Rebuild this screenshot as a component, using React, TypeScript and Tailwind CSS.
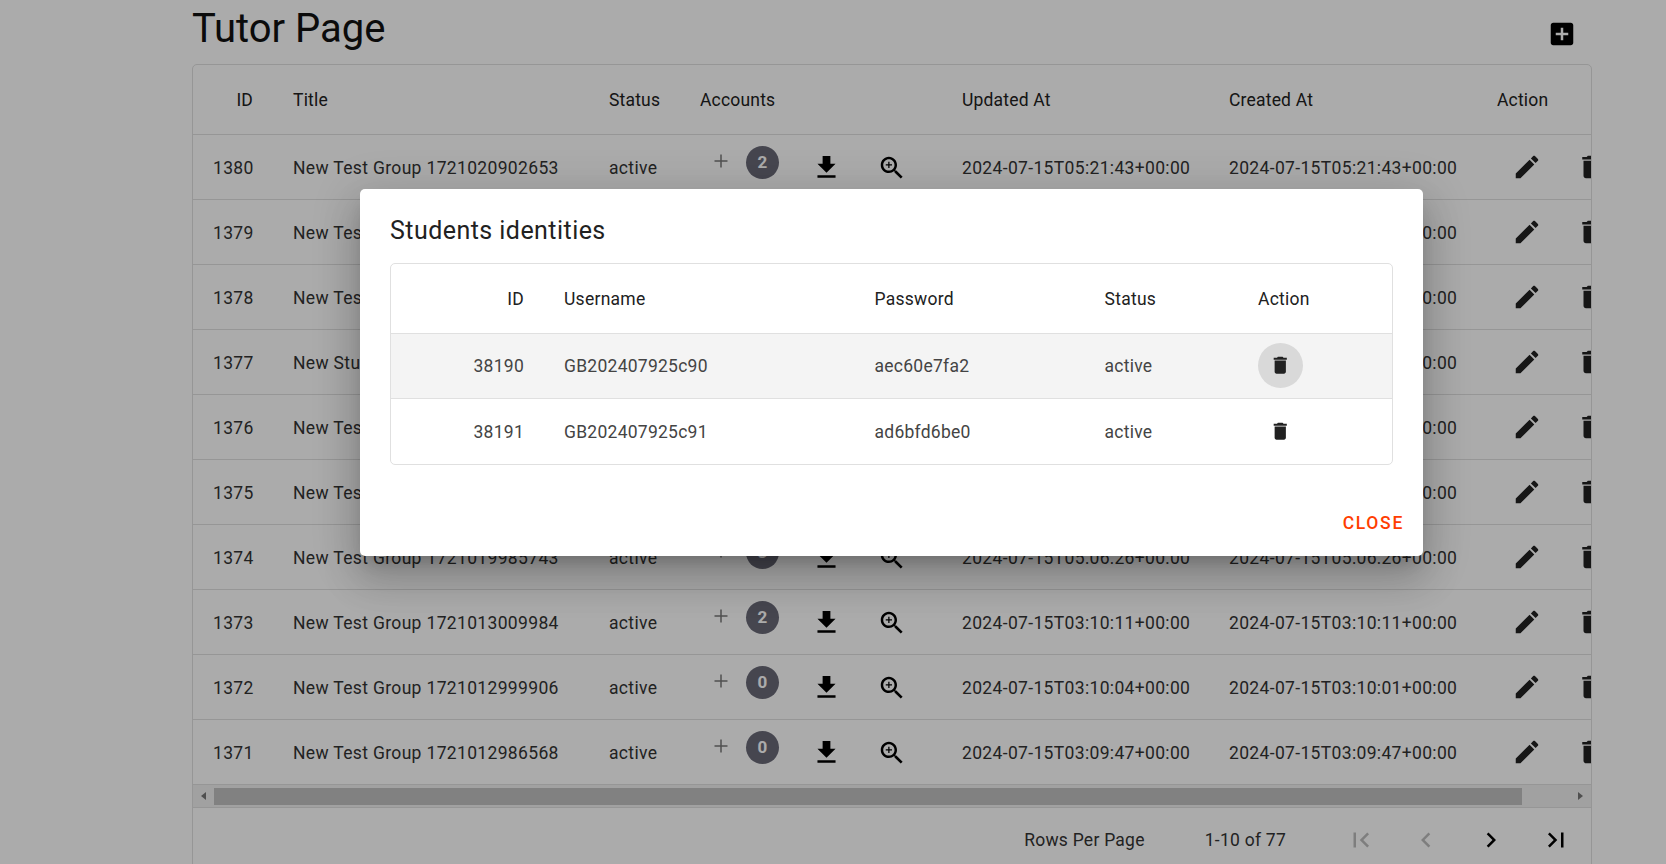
const ICONS = {
  addBox: "M19 3H5c-1.11 0-2 .9-2 2v14c0 1.1.89 2 2 2h14c1.1 0 2-.9 2-2V5c0-1.1-.9-2-2-2zm-2 10h-4v4h-2v-4H7v-2h4V7h2v4h4v2z",
  download: "M5 20h14v-2H5v2zM19 9h-4V3H9v6H5l7 7 7-7z",
  zoomIn: "M15.5 14h-.79l-.28-.27C15.41 12.59 16 11.11 16 9.5 16 5.91 13.09 3 9.5 3S3 5.91 3 9.5 5.91 16 9.5 16c1.61 0 3.09-.59 4.23-1.57l.27.28v.79l5 4.99L20.49 19l-4.99-5zm-6 0C7.01 14 5 11.99 5 9.5S7.01 5 9.5 5 14 7.01 14 9.5 11.99 14 9.5 14zM12 10h-2v2H9v-2H7V9h2V7h1v2h2v1z",
  edit: "M3 17.25V21h3.75L17.81 9.94l-3.75-3.75L3 17.25zM20.71 7.04c.39-.39.39-1.02 0-1.41l-2.34-2.34c-.39-.39-1.02-.39-1.41 0l-1.83 1.83 3.75 3.75 1.83-1.83z",
  trash: "M6 19c0 1.1.9 2 2 2h8c1.1 0 2-.9 2-2V7H6v12zM19 4h-3.5l-1-1h-5l-1 1H5v2h14V4z",
  first: "M18.41 16.59L13.82 12l4.59-4.59L17 6l-6 6 6 6zM6 6h2v12H6z",
  prev: "M15.41 7.41L14 6l-6 6 6 6 1.41-1.41L10.83 12z",
  next: "M10 6L8.59 7.41 13.17 12l-4.58 4.59L10 18l6-6z",
  last: "M5.59 7.41L10.18 12l-4.59 4.59L7 18l6-6-6-6zM16 6h2v12h-2z",
};

function Icon({ name, className }: { name: keyof typeof ICONS; className: string }) {
  return (
    <svg viewBox="0 0 24 24" fill="currentColor" className={className}>
      <path d={ICONS[name]} />
    </svg>
  );
}

const rows = [
  { id: 1380, title: "New Test Group 1721020902653", count: 2, updated: "2024-07-15T05:21:43+00:00", created: "2024-07-15T05:21:43+00:00" },
  { id: 1379, title: "New Test Group 1721020877412", count: 0, updated: "2024-07-15T05:21:18+00:00", created: "2024-07-15T05:21:18+00:00" },
  { id: 1378, title: "New Test Group 1721020861120", count: 0, updated: "2024-07-15T05:21:01+00:00", created: "2024-07-15T05:21:01+00:00" },
  { id: 1377, title: "New Student Group 172102055", count: 0, updated: "2024-07-15T05:15:52+00:00", created: "2024-07-15T05:15:52+00:00" },
  { id: 1376, title: "New Test Group 1721020210334", count: 0, updated: "2024-07-15T05:10:10+00:00", created: "2024-07-15T05:10:10+00:00" },
  { id: 1375, title: "New Test Group 1721020003217", count: 0, updated: "2024-07-15T05:06:43+00:00", created: "2024-07-15T05:06:43+00:00" },
  { id: 1374, title: "New Test Group 1721019985743", count: 3, updated: "2024-07-15T05:06:26+00:00", created: "2024-07-15T05:06:26+00:00" },
  { id: 1373, title: "New Test Group 1721013009984", count: 2, updated: "2024-07-15T03:10:11+00:00", created: "2024-07-15T03:10:11+00:00" },
  { id: 1372, title: "New Test Group 1721012999906", count: 0, updated: "2024-07-15T03:10:04+00:00", created: "2024-07-15T03:10:01+00:00" },
  { id: 1371, title: "New Test Group 1721012986568", count: 0, updated: "2024-07-15T03:09:47+00:00", created: "2024-07-15T03:09:47+00:00" },
];

const identities = [
  { id: 38190, username: "GB202407925c90", password: "aec60e7fa2", hovered: true },
  { id: 38191, username: "GB202407925c91", password: "ad6bfd6be0", hovered: false },
];

const cell = "border-b border-[#e0e0e0] px-5 text-left font-normal";

function TutorTable() {
  return (
    <div className="overflow-hidden">
      <table className="w-[1450px] table-fixed text-[17.5px] tracking-[0.34px]">
        <colgroup>
          <col className="w-[80px]" />
          <col className="w-[316px]" />
          <col className="w-[91px]" />
          <col className="w-[262px]" />
          <col className="w-[267px]" />
          <col className="w-[268px]" />
          <col className="w-[166px]" />
        </colgroup>
        <thead>
          <tr className="h-[69px] tracking-[0.19px] text-[#212121]">
            <th className={`${cell} pt-px !text-right`}>ID</th>
            <th className={`${cell} pt-px`}>Title</th>
            <th className={`${cell} pt-px`}>Status</th>
            <th className={`${cell} pt-px`}>Accounts</th>
            <th className={`${cell} pt-px`}>Updated At</th>
            <th className={`${cell} pt-px`}>Created At</th>
            <th className={`${cell} pt-px`}>Action</th>
          </tr>
        </thead>
        <tbody className="text-[#333333]">
          {rows.map((row) => (
            <tr key={row.id} className="h-[65px]">
              <td className={`${cell} pt-1 !text-right`}>{row.id}</td>
              <td className={`${cell} whitespace-nowrap pt-1`}>{row.title}</td>
              <td className={`${cell} pt-1`}>active</td>
              <td className={cell}>
                <div className="flex items-center">
                  <svg viewBox="0 0 14 14" className="mb-[11px] ml-[14px] h-[14px] w-[14px] text-[#777777]" stroke="currentColor" strokeWidth="1.5">
                    <path d="M7 0.5v13M0.5 7h13" />
                  </svg>
                  <span className="mb-2 ml-[18px] flex h-[33px] w-[33px] items-center justify-center rounded-full bg-[#696977] text-[17px] font-bold text-white">
                    {row.count}
                  </span>
                  <Icon name="download" className="ml-[32px] mt-[2px] h-[31px] w-[31px] text-black" />
                  <Icon name="zoomIn" className="ml-[35px] mt-[3px] h-[30px] w-[30px] text-black" />
                </div>
              </td>
              <td className={`${cell} whitespace-nowrap pt-1`}>{row.updated}</td>
              <td className={`${cell} whitespace-nowrap pt-1`}>{row.created}</td>
              <td className={cell}>
                <div className="flex items-center gap-[34px] pl-[15px] text-[#212121]">
                  <Icon name="edit" className="h-[30px] w-[30px] shrink-0" />
                  <Icon name="trash" className="h-[30px] w-[30px] shrink-0" />
                </div>
              </td>
            </tr>
          ))}
        </tbody>
      </table>
    </div>
  );
}

function ScrollBar() {
  return (
    <div className="flex h-[23px] items-start border-b border-[#e0e0e0] bg-[#f1f1f1] pt-[3px]">
      <div className="flex h-[17px] w-[21px] items-center justify-center">
        <div className="h-0 w-0 border-y-[4.5px] border-r-[5px] border-y-transparent border-r-[#777777]" />
      </div>
      <div className="h-[17px] w-[1308px] bg-[#c1c1c1]" />
      <div className="ml-auto mr-[8px] mt-1 h-0 w-0 border-y-[4.5px] border-l-[5px] border-y-transparent border-l-[#777777]" />
    </div>
  );
}

function Pagination() {
  return (
    <div className="flex h-[64px] items-center justify-end gap-[60px] pr-5 text-[17.5px] tracking-[0.25px] text-[#333333]">
      <span className="pt-[2px]">Rows Per Page</span>
      <span className="pt-[2px]">1-10 of 77</span>
      <div className="flex items-center gap-[35px]">
        <Icon name="first" className="h-[30px] w-[30px] text-[#bdbdbd]" />
        <Icon name="prev" className="h-[30px] w-[30px] text-[#bdbdbd]" />
        <Icon name="next" className="h-[30px] w-[30px] text-black" />
        <Icon name="last" className="h-[30px] w-[30px] text-black" />
      </div>
    </div>
  );
}

function IdentitiesDialog() {
  return (
    <div className="absolute inset-0 bg-black/[0.33] pl-[360px] pt-[189px]">
      <div className="h-[367px] w-[1063px] rounded-[5px] bg-white shadow-[0_11px_15px_-7px_rgba(0,0,0,0.2),0_24px_38px_3px_rgba(0,0,0,0.14),0_9px_46px_8px_rgba(0,0,0,0.12)]">
        <h2 className="px-[30px] pb-[14px] pt-[24px] text-[25px] font-[450] leading-[36px] tracking-[0.45px] text-[#212121]">
          Students identities
        </h2>
        <div className="mx-[30px] overflow-hidden rounded-[5px] border border-[#e0e0e0]">
          <table className="w-full table-fixed text-[17.5px] tracking-[0.26px]">
            <colgroup>
              <col className="w-[153px]" />
              <col className="w-[310.5px]" />
              <col className="w-[230px]" />
              <col className="w-[153.5px]" />
              <col />
            </colgroup>
            <thead>
              <tr className="h-[69px] text-[#212121]">
                <th className={`${cell} pt-px !text-right`}>ID</th>
                <th className={`${cell} pt-px`}>Username</th>
                <th className={`${cell} pt-px`}>Password</th>
                <th className={`${cell} pt-px`}>Status</th>
                <th className={`${cell} pt-px`}>Action</th>
              </tr>
            </thead>
            <tbody className="text-[#444444]">
              {identities.map((item, index) => {
                const last = index === identities.length - 1 ? "border-b-0" : "";
                return (
                  <tr key={item.id} className={item.hovered ? "h-[65px] bg-[#f4f4f4]" : "h-[66px]"}>
                    <td className={`${cell} pt-[2px] !text-right ${last}`}>{item.id}</td>
                    <td className={`${cell} pt-[2px] ${last}`}>{item.username}</td>
                    <td className={`${cell} pt-[2px] ${last}`}>{item.password}</td>
                    <td className={`${cell} pt-[2px] ${last}`}>active</td>
                    <td className={`${cell} ${last}`}>
                      <span className={`flex h-[45px] w-[45px] items-center justify-center rounded-full text-[#212121] ${item.hovered ? "bg-[#d9d9d9]" : ""}`}>
                        <Icon name="trash" className="h-[22.5px] w-[22.5px]" />
                      </span>
                    </td>
                  </tr>
                );
              })}
            </tbody>
          </table>
        </div>
        <div className="flex justify-end pr-[19px] pt-[44px]">
          <button className="text-[17.5px] font-medium uppercase leading-[28px] tracking-[1.7px] text-[#ff3d00]">Close</button>
        </div>
      </div>
    </div>
  );
}

export default function App() {
  return (
    <div className="relative h-screen overflow-hidden bg-white font-['Roboto',sans-serif]">
      <div className="pl-[192px] pr-[74px]">
        <div className="flex h-[64px] items-start justify-between">
          <h1 className="pt-[4px] text-[40px] font-normal leading-[50px] text-[#111111]">Tutor Page</h1>
          <Icon name="addBox" className="mr-[15px] mt-[19px] h-[30px] w-[30px] text-black" />
        </div>
        <div className="rounded-[5px] border border-[#e0e0e0]">
          <TutorTable />
          <ScrollBar />
          <Pagination />
        </div>
      </div>
      <IdentitiesDialog />
    </div>
  );
}
